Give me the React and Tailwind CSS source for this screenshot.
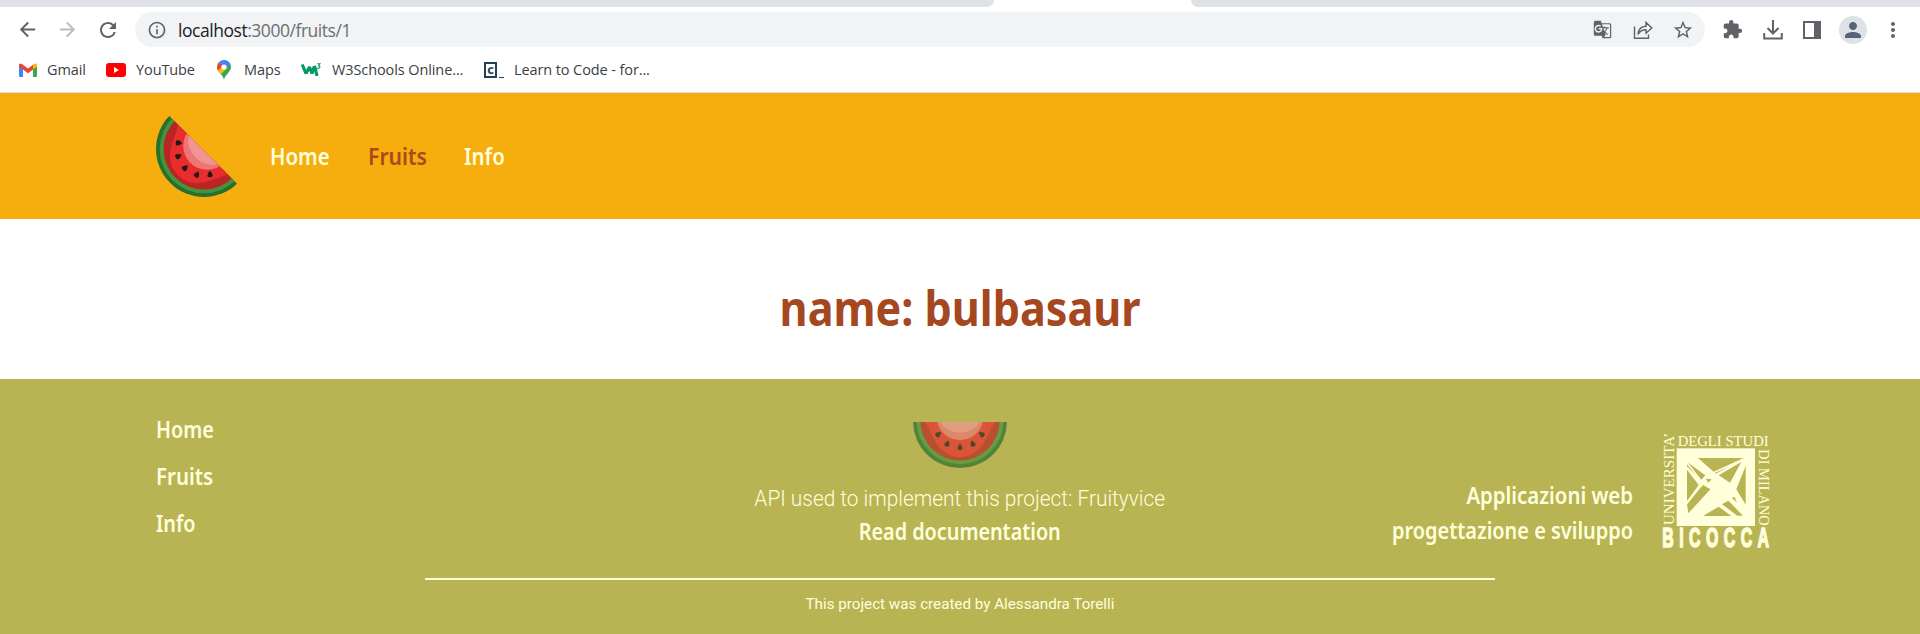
import React from "react";
import { MdArrowBack, MdArrowForward, MdRefresh, MdInfoOutline, MdStarOutline, MdExtension, MdPerson, MdMoreVert, MdGTranslate } from "react-icons/md";

function Melon({ className, viewBox }) {
  const id = React.useId();
  return (
    <svg viewBox={viewBox} className={className}>
      <defs>
        <clipPath id={id + "a"}><rect x="-50" y="1.2" width="100" height="50" /></clipPath>
        <clipPath id={id + "b"}><circle r="40.5" /></clipPath>
      </defs>
      <g clipPath={`url(#${id}a)`}>
        <circle r="48" fill="#26702c" />
        <circle r="44.3" fill="#43953c" />
        <circle r="40.5" fill="#ba2424" />
        <g clipPath={`url(#${id}b)`}>
          <path d="M-37 0C-28 7-27 36 0 37C27 36 28 7 37 0Z" fill="#e92d2d" />
        </g>
        <circle cy="-4.5" r="24" fill="#ee7576" />
        <ellipse cy="-6" rx="22" ry="18" fill="#f39492" />
        <g fill="#211a17">
          <path d="M0 -3.5Q5.5 3.2 0 3.2Q-5.5 3.2 0 -3.5Z" transform="translate(0 26.5)" />
          <path d="M0 -3.5Q5.5 3.2 0 3.2Q-5.5 3.2 0 -3.5Z" transform="translate(-13 23) rotate(18)" />
          <path d="M0 -3.5Q5.5 3.2 0 3.2Q-5.5 3.2 0 -3.5Z" transform="translate(13 23) rotate(-18)" />
          <path d="M0 -3.5Q5.5 3.2 0 3.2Q-5.5 3.2 0 -3.5Z" transform="translate(-22 13.5) rotate(50)" />
          <path d="M0 -3.5Q5.5 3.2 0 3.2Q-5.5 3.2 0 -3.5Z" transform="translate(22 13.5) rotate(-50)" />
        </g>
      </g>
    </svg>
  );
}

function Bicocca() {
  return (
    <svg viewBox="66 36 324 351" className="h-[117px] w-[108px] shrink-0 overflow-visible" fill="#ffffdc">
      <g fontFamily="Liberation Serif, serif" fontSize="43">
        <text x="113" y="77" textLength="273" lengthAdjust="spacingAndGlyphs">DEGLI STUDI</text>
        <text transform="translate(102 315) rotate(-90)" textLength="277" lengthAdjust="spacingAndGlyphs">UNIVERSITA’</text>
        <text transform="translate(356 88) rotate(90)" textLength="229" lengthAdjust="spacingAndGlyphs">DI MILANO</text>
      </g>
      <rect x="110" y="85" width="235" height="233" />
      <g fill="#b8b453">
        <path d="M174 114H311L228 161Z" />
        <path d="M141 126L196 166L183 181L141 139Z" />
        <path d="M141 149L176 195L141 243Z" />
        <path d="M141 253L183 202L190 195L212 207L145 280Z" />
        <path d="M236 166L304 126L270 188Z" />
        <path d="M317 138V254L289 208Z" />
        <path d="M189 288L236 260L274 288Z" />
        <path d="M246 253L265 242L309 287H292Z" />
        <path d="M275 233L284 231L290 247Z" />
        <path d="M197 176L215 178L205 188Z" />
      </g>
      <path d="M141 128L188 188L141 250M220 158L312 116M196 196L228 214" fill="none" stroke="#ffffdc" strokeWidth="5" />
      <text x="0" y="382" fontFamily="Liberation Sans Narrow, Liberation Sans, sans-serif" fontWeight="700" fontSize="82" stroke="#ffffdc" strokeWidth="5" transform="translate(67 0) scale(.58 1)" textLength="552" lengthAdjust="spacing">BICOCCA</text>
    </svg>
  );
}

function Browser() {
  return (
    <div className="h-[93px] border-b border-[#dadce0] bg-white font-['Open_Sans','Noto_Sans',sans-serif]">
      <div className="flex h-[7px] justify-between">
        <div className="w-[994px] rounded-br-[10px] bg-[#dee1e6]" />
        <div className="w-[729px] rounded-bl-[10px] bg-[#dee1e6]" />
      </div>
      <div className="flex h-[45px] items-center text-[#5f6368]">
        <MdArrowBack className="ml-[16px] size-[23px]" />
        <MdArrowForward className="ml-[17px] size-[23px] text-[#babcbe]" />
        <MdRefresh className="ml-[17px] size-[24px]" />
        <div className="ml-[15px] flex h-[35px] w-[1570px] items-center rounded-full bg-[#f1f3f4]">
          <MdInfoOutline className="ml-[12px] size-[20px]" />
          <div className="ml-[11px] text-[17.5px] leading-[24px] tracking-[-0.46px] text-[#6b6f73]"><span className="text-[#202124]">localhost</span>:3000/fruits/1</div>
          <MdGTranslate className="ml-auto size-[19px]" />
          <svg viewBox="0 0 20 20" className="ml-[21px] size-[20px]" fill="none" stroke="currentColor" strokeWidth="1.4"><path d="M1.5 6.5V18.3H15.5V14.5" /><path d="M5 14.5C5.500 9 8 6.500 13 6.300V2.500L18.800 8L13 13.200V9.700C9.500 9.600 7 11 5 14.500Z" /></svg>
          <MdStarOutline className="ml-[19px] mr-[11px] size-[22px]" />
        </div>
        <MdExtension className="ml-[17px] size-[21px]" />
        <svg viewBox="0 0 20 20" className="ml-[20px] size-[20px]" fill="none" stroke="currentColor" strokeWidth="2"><path d="M10 0V13M4.500 8L10 13.500L15.500 8M1.200 13V18.500H18.800V13" /></svg>
        <svg viewBox="0 0 18 18" className="ml-[20px] size-[18px]" fill="none" stroke="currentColor" strokeWidth="2"><path d="M1 1H17V17H1Z" /><path d="M12 1H17V17H12Z" fill="currentColor" /></svg>
        <div className="ml-[18px] flex size-[28px] items-center justify-center rounded-full bg-[#dee1e6] text-[#56627a]"><MdPerson className="size-[24px]" /></div>
        <MdMoreVert className="ml-[14px] size-[24px]" />
      </div>
      <div className="flex h-[36px] items-center text-[14.5px] leading-[20px] tracking-[-0.1px] text-[#3c4043]">
        <svg viewBox="0 0 18 14" className="ml-[19px] h-[14px] w-[18px]"><path d="M0 1.500V13q0 1 1 1H4V5Z" fill="#4285f4" /><path d="M14 5V14H17q1 0 1-1V1.500Z" fill="#34a853" /><path d="M14 2L15 1Q18-.5 18 2V3.500L14 6.500Z" fill="#fbbc04" /><path d="M4 6.500L0 3.500V2Q0-.5 3 1L9 5.500L14 1.800V6.500L9 10.200Z" fill="#ea4335" /></svg>
        <span className="ml-[10px] w-[39px]">Gmail</span>
        <svg viewBox="0 0 20 14" className="ml-[20px] h-[14px] w-[20px]"><rect width="20" height="14" rx="3" fill="#f00" /><path d="M8 4L13 7L8 10Z" fill="#fff" /></svg>
        <span className="ml-[10px] w-[58px]">YouTube</span>
        <svg viewBox="0 0 14 20" className="ml-[23px] h-[20px] w-[14px]">
          <path d="M7 20C6.500 15 0 12 0 7L7 0A7 7 0 0 1 14 7C14 12 7.500 15 7 20Z" fill="#34a853" />
          <path d="M2 2A7 7 0 0 0 1.500 11L7 7Z" fill="#ea4335" /><path d="M1.200 10.500Q2 12.500 4 14.300L11 7L7 5Z" fill="#fbbc04" /><path d="M2 2A7 7 0 0 1 13.500 5L8 9Z" fill="#4285f4" /><circle cx="7" cy="7" r="2.600" fill="#fff" />
        </svg>
        <span className="ml-[13px] w-[37px]">Maps</span>
        <svg viewBox="0 0 20 14" className="ml-[20px] h-[14px] w-[20px] overflow-visible" fill="none" stroke="#059862"><path d="M1.200 1.500L5 10.500L8.500 4L11 10.500L13.300 3.500Q14.500 5 15 8.500L16 13" strokeWidth="3.200" strokeLinejoin="bevel" /><path d="M16.200 .8H19L17.600 2.800Q19.300 3 18.800 4.600Q18 6 16 5" strokeWidth="1.100" /></svg>
        <span className="ml-[11px] w-[132px] whitespace-nowrap">W3Schools Online...</span>
        <div className="ml-[20px] flex h-[16px] w-[20px] items-end text-[#1d425d]">
          <div className="flex h-[16px] w-[13px] items-center justify-center border-2 border-[#1d425d] pb-[2px] text-[13px] font-bold">c</div><div className="ml-[2px] h-px w-[5px] bg-[#1d425d]" />
        </div>
        <span className="ml-[10px] whitespace-nowrap">Learn to Code - for...</span>
      </div>
    </div>
  );
}

export default function App() {
  return (
    <div className="h-[634px] w-full overflow-hidden bg-white font-['Noto_Sans',sans-serif] text-[#ffffdc]">
      <Browser />
      <header className="flex h-[126px] items-center bg-[#f6ad0e] pl-[156px]">
        <div className="h-[81px] w-[82px] overflow-visible"><Melon viewBox="-48 -48 96 96" className="mt-[-15px] size-[96px] max-w-none rotate-45" /></div>
        <nav className="ml-[32px] flex text-[23.5px] font-semibold leading-[32px]">
          <a className="w-[98px] origin-left scale-x-[.87]">Home</a><a className="w-[96px] origin-left scale-x-[.9] text-[#a9481d]">Fruits</a><a className="origin-left scale-x-[.87]">Info</a>
        </nav>
      </header>
      <main className="flex h-[160px] justify-center pt-[54px]">
        <h1 className="scale-x-[.88] whitespace-nowrap text-[49px] font-bold leading-[68px] text-[#a5471f]">name: bulbasaur</h1>
      </main>
      <footer className="h-[255px] bg-[#b8b453]">
        <div className="flex h-[199px] justify-between pl-[156px] pr-[150px]">
          <nav className="flex w-[447px] flex-col gap-[15px] pt-[35px] text-[22.5px] font-semibold leading-[32px]">
            <a className="origin-left scale-x-[.88]">Home</a><a className="origin-left scale-x-[.91]">Fruits</a><a className="origin-left scale-x-[.88]">Info</a>
          </nav>
          <div className="flex w-[714px] flex-col items-center pt-[43px]">
            <Melon viewBox="-48 1.2 96 46.8" className="h-[46px] w-[94px] opacity-70" />
            <p className="mt-[13px] scale-x-[.97] whitespace-nowrap font-[Roboto,sans-serif] text-[21.500px] font-light leading-[35px]">API used to implement this project: Fruityvice</p>
            <p className="scale-x-[.88] whitespace-nowrap text-[22.5px] font-semibold leading-[32px]">Read documentation</p>
          </div>
          <div className="flex w-[453px] justify-end pt-[53px]">
            <div className="mr-[29px] origin-right whitespace-nowrap pt-[46px] text-right text-[22.5px] font-semibold leading-[35px]"><p className="origin-right scale-x-[.905]">Applicazioni web</p><p className="origin-right scale-x-[.886]">progettazione e sviluppo</p></div>
            <Bicocca />
          </div>
        </div>
        <div className="mx-auto h-[2px] w-[1070px] bg-[#ffffdc]" />
        <p className="mt-[12px] scale-x-[.98] text-center font-[Roboto,sans-serif] text-[15.500px] leading-[24px]">This project was created by Alessandra Torelli</p>
      </footer>
    </div>
  );
}
